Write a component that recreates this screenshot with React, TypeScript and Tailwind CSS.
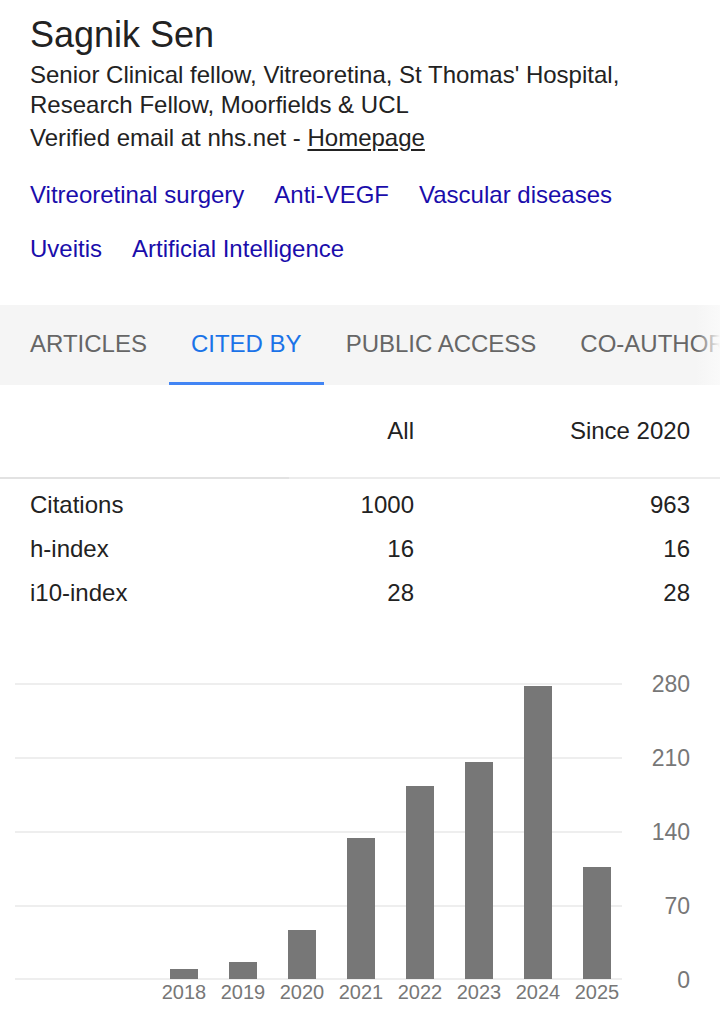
const tags = [
  ["Vitreoretinal surgery", "Anti-VEGF", "Vascular diseases"],
  ["Uveitis", "Artificial Intelligence"],
];

const tabs = ["ARTICLES", "CITED BY", "PUBLIC ACCESS", "CO-AUTHORS"];

const stats = [
  { label: "Citations", all: "1000", since: "963" },
  { label: "h-index", all: "16", since: "16" },
  { label: "i10-index", all: "28", since: "28" },
];

const years = [
  { year: "2018", value: 9 },
  { year: "2019", value: 16 },
  { year: "2020", value: 46 },
  { year: "2021", value: 133 },
  { year: "2022", value: 183 },
  { year: "2023", value: 205 },
  { year: "2024", value: 277 },
  { year: "2025", value: 106 },
];

const ticks = ["280", "210", "140", "70", "0"];

export default function App() {
  return (
    <div className="w-[720px] h-[1024px] overflow-hidden bg-white font-['Liberation_Sans',Arial,sans-serif] text-[#222]">
      {/* Profile header */}
      <header className="px-[30px] pt-[14px]">
        <h1 className="text-[36px] leading-[42px]">Sagnik Sen</h1>
        <div className="mt-[4px] text-[24px] leading-[30px]">
          <div>Senior Clinical fellow, Vitreoretina, St Thomas' Hospital,</div>
          <div>Research Fellow, Moorfields &amp; UCL</div>
        </div>
        <div className="mt-[3px] text-[24px] leading-[30px]">
          Verified email at nhs.net - <span className="underline underline-offset-[3px]">Homepage</span>
        </div>

        <div className="mt-[27px] flex flex-col gap-[24px]">
          {tags.map((row, i) => (
            <div key={i} className="flex gap-[30px] text-[24px] leading-[30px] text-[#1a0dab]">
              {row.map((t) => (
                <span key={t}>{t}</span>
              ))}
            </div>
          ))}
        </div>
      </header>

      {/* Tabs */}
      <nav className="relative mt-[41px] h-[80px] bg-[#f5f5f5] overflow-hidden">
        <div className="flex h-full pl-[8px] whitespace-nowrap">
          {tabs.map((t) => {
            const active = t === "CITED BY";
            return (
              <div
                key={t}
                className={
                  active
                    ? "flex items-center px-[22px] pt-[1px] text-[24px] text-[#1a73e8] border-b-[3px] border-[#4285f4]"
                    : "flex items-center px-[22px] pt-[1px] text-[24px] text-[#666] border-b-[3px] border-transparent"
                }
              >
                {t}
              </div>
            );
          })}
        </div>
        <div className="absolute right-0 top-0 h-full w-[24px] bg-gradient-to-r from-transparent to-[#fafafa]" />
      </nav>

      {/* Citation table */}
      <section>
        <div className="grid grid-cols-[204px_180px_276px] px-[30px] h-[92px] items-center text-[24px]">
          <div />
          <div className="text-right">All</div>
          <div className="text-right">Since 2020</div>
        </div>
        <div className="flex h-[2px]">
          <div className="w-[289px] bg-[#e2e2e2]" />
          <div className="flex-1 bg-[#ececec]" />
        </div>
        <div className="pt-[4px]">
          {stats.map((s) => (
            <div
              key={s.label}
              className="grid grid-cols-[204px_180px_276px] px-[30px] h-[44px] items-center text-[24px]"
            >
              <div>{s.label}</div>
              <div className="text-right">{s.all}</div>
              <div className="text-right">{s.since}</div>
            </div>
          ))}
        </div>
      </section>

      {/* Chart */}
      <section className="mt-[68px] flex pl-[15px]">
        <div className="w-[607px]">
          <div className="relative h-[296px]">
            {[0, 74, 148, 222, 295].map((top) => (
              <div
                key={top}
                className="absolute left-0 right-0 h-[2px] bg-[#eeeeee]"
                style={{ top }}
              />
            ))}
            <div className="relative flex h-full items-end justify-end gap-[31px] pr-[11px]">
              {years.map((y) => (
                <div
                  key={y.year}
                  className="w-[28px] bg-[#777777]"
                  style={{ height: Math.round((y.value * 74) / 70) }}
                />
              ))}
            </div>
          </div>
          <div className="mt-[1px] flex justify-end gap-[31px] pr-[11px]">
            {years.map((y) => (
              <div key={y.year} className="w-[28px] flex justify-center">
                <span className="text-[20px] leading-[24px] text-[#777]">{y.year}</span>
              </div>
            ))}
          </div>
        </div>
        <div className="w-[68px] -mt-[11px] flex flex-col gap-[50px] text-right text-[23px] leading-[24px] text-[#777]">
          {ticks.map((t) => (
            <div key={t}>{t}</div>
          ))}
        </div>
      </section>
    </div>
  );
}
